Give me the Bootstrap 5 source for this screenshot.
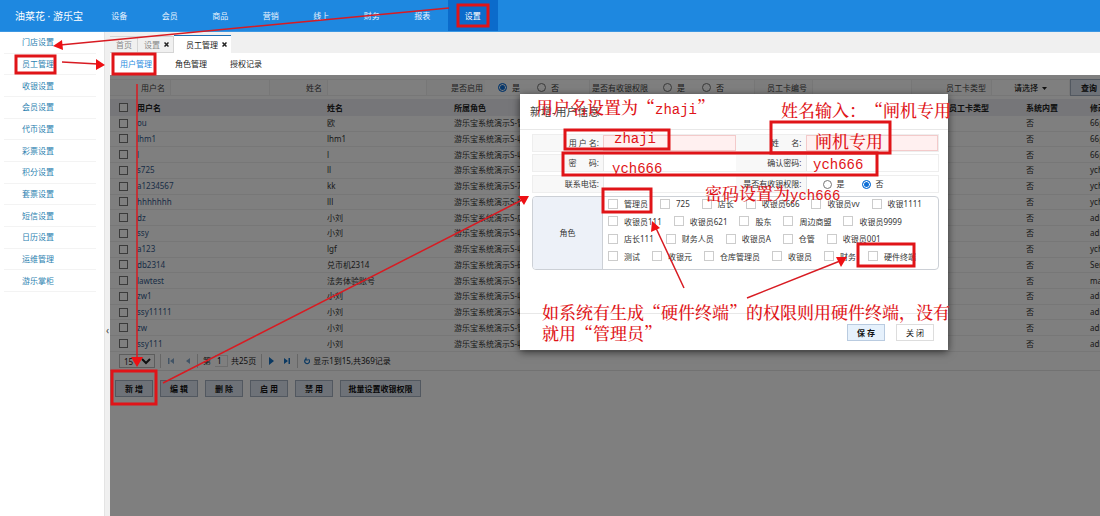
<!DOCTYPE html>
<html lang="zh-CN">
<head>
<meta charset="utf-8">
<meta name="viewport" content="width=device-width, initial-scale=1">
<title>员工管理</title>
<link href="https://cdn.jsdelivr.net/npm/bootstrap@5.3.0/dist/css/bootstrap.min.css" rel="stylesheet">
<style>
body{font:8px/12px "Noto Sans","Noto Sans CJK SC",sans-serif;color:#333;background:#fff;overflow:hidden;position:relative}
a{text-decoration:none}
.topbar{height:32px;background:#1e88e0;border-bottom:1px solid #3c97e2}
.brand{width:94px;padding-left:15px;font-size:10px;color:#fff;white-space:nowrap}
.mainnav{width:404px}
.mainnav a{color:#e8f3fd;flex:1 1 0;text-align:center;line-height:31px;height:31px}
.mainnav a.active{background:#0b6bcb;color:#fff}
.side{width:104px;flex:none}
.side nav{height:260px;padding:0 8px 0 4px}
.side a{flex:1 1 0;padding-left:18px;color:#2c7fb0;border-bottom:1px solid #f3f3f3;display:flex;align-items:center}
.splitter{width:6px;flex:none;background:#f0f0f0;border-left:1px solid #e4e4e4}
.splitter button{position:absolute;top:292px;left:0;width:5px;border:0;padding:0;background:none;color:#444;font-size:10px;line-height:12px}
.tabstrip{height:21px;background:#f0f0f0}
.tabstrip a{height:17px;border:1px solid #d5d5d5;border-left-width:0;color:#888;display:flex;align-items:center;gap:4px;white-space:nowrap}
.tabstrip a.home{padding:0 5px 0 6px}
.tabstrip a.other{padding:0 4px 0 6px}
.tabstrip a.active{height:18px;background:#fff;border:0;border-top:1px solid #1c6fb5;color:#222;padding:0 4px 0 12px}
.tabstrip svg{width:5px;height:5px}
.subtabs{height:22px;padding-left:10px}
.subtabs a{width:55px;color:#222}
.subtabs a.active{color:#2b8be0}
.work{padding:4px 0 0}
.shade{position:absolute;inset:0;background:rgba(0,0,0,.5)}
.filters{height:17px;width:1040px;margin-bottom:3px}
.filters>label,.filters>span.cap{background:#fafafa;border:1px solid #eee;border-width:1px 0;height:17px;line-height:15px;text-align:right;padding-right:5px;color:#444;flex:none;white-space:nowrap}
.filters>span.cap{padding-right:2px}
.filters .field{flex:none;height:17px;border:1px solid #eee;border-radius:0;background:#fff;padding:0 3px;font-size:8px}
.filters .choice{padding-left:13px}
.w38{width:38px}.w60{width:60px}.w57{width:57px}.w58{width:58px}.w100{width:100px}.w105{width:105px}.w79{width:79px}
.pick{appearance:none;flex:none;width:9px;height:9px;margin:0;border:1px solid #767676;background:#fff}
.pick[type=radio]{border-radius:50%}
.pick[type=radio]:checked{border:1px solid #0f6fd6;background:#0f6fd6;box-shadow:inset 0 0 0 1px #fff}
.rad{gap:5px;width:39px;display:flex;align-items:center}
.act{font:bold 8px/15px "Noto Sans","Noto Sans CJK SC",sans-serif;height:17px;border:1px solid #a5b0c0;background:#dde4f0;color:#111;padding:0;flex:none;border-radius:0}
.grid{table-layout:fixed;width:1090px;height:253px;border-collapse:collapse}
.grid thead tr{height:17px}
.grid th{background:#ecedf2;color:#222;font-weight:bold;padding:0;white-space:nowrap}
.grid td{padding:0;border-bottom:1px solid #eee;white-space:nowrap;line-height:12px}
.grid td a{color:#345a8c}
.grid .pick{display:block;margin-left:9px}
.pager{height:19px;padding-left:9px;color:#222;border-bottom:1px solid #e5e5e5;white-space:nowrap}
.pager select{width:36px;height:14px;border:1px solid #bbb;font-size:8px;line-height:12px;padding:0;background:#fff;color:#222}
.pager input{width:13px;height:12px;border:1px solid #ddd;border-left:0;font-size:8px;padding:0 0 0 2px;text-align:left}
.pager button{border:0;background:none;padding:0;width:6px;height:8px;display:flex}
.pager svg{width:6px;height:8px}
.pager .rule{width:1px;height:14px;background:#ccc}
.tools{gap:7px;padding:9px 0 0 5px}
.tools .act{width:38px}.tools .act.wide{width:81px}
.dlg{position:absolute;left:520px;top:94px;width:428px;height:256px;background:#fff;box-shadow:0 2px 8px rgba(0,0,0,.6)}
.dlg h1{font-size:11px;line-height:35px;height:36px;margin:0;padding-left:10px;border-bottom:1px solid #e8e8e8;font-weight:400;color:#444}
.dlg .frm{padding:4px 9px 0 12px}
.dlg .line{height:18px;margin-bottom:3px;border:1px solid #eee;background:#fff}
.dlg .line:first-child{margin-bottom:2px}
.dlg .lab{width:70px;flex:none;background:#f8f8f8;text-align:right;padding-right:4px;line-height:16px;white-space:pre}
.dlg .line input.txt{flex:1 1 0;min-width:0;border:0;border-left:1px solid #e5e5e5;font-size:8px;padding:0 3px;border-radius:0}
.dlg .line input.need{background:#fff0f0;border:1px solid #f3caca}
.dlg .half{flex:1 1 0;min-width:0}
.roles{height:74px;border:1px solid #ccd0d6;border-radius:4px;overflow:hidden}
.roles .ttl{width:70px;background:#edf1f8;border-right:1px solid #ccd0d6}
.roles .opts{padding:0 0 6px 5px}
.roles label{display:flex;align-items:center;gap:6px;margin-right:12px;line-height:13px;white-space:nowrap}
.roles .pick{border-color:#ccc;width:10px;height:10px}
.dlg footer{position:absolute;left:0;right:0;bottom:0;height:37px;border-top:1px solid #e8e8e8;padding:10px 14px 0;gap:11px}
.dlg footer .act{width:38px}
.dlg footer .act.save{background:#e6f1fc;border-color:#b9cbe0}
.dlg footer .act.plain{background:#fff;border-color:#ddd;font-weight:400}
.notes{position:absolute;left:0;top:0;width:1100px;height:516px;pointer-events:none;overflow:visible}
.notes text{font:500 17px "Noto Serif CJK SC","Noto Sans CJK SC",serif;fill:#e01418;font-kerning:none;text-spacing-trim:space-all;font-feature-settings:"chws" 0}
.notes .la{font:14px "Liberation Mono",monospace}
</style>
</head>
<body class="vh-100 d-flex flex-column">
<header class="topbar d-flex align-items-center flex-shrink-0">
  <div class="brand">油菜花 · 游乐宝</div>
  <nav class="mainnav d-flex"><a href="#">设备</a><a href="#">会员</a><a href="#">商品</a><a href="#">营销</a><a href="#">线上</a><a href="#">财务</a><a href="#">报表</a><a href="#" class="active">设置</a></nav>
</header>
<div class="d-flex flex-grow-1">
  <aside class="side"><nav class="d-flex flex-column"><a href="#">门店设置</a><a href="#">员工管理</a><a href="#">收银设置</a><a href="#">会员设置</a><a href="#">代币设置</a><a href="#">彩票设置</a><a href="#">积分设置</a><a href="#">套票设置</a><a href="#">短信设置</a><a href="#">日历设置</a><a href="#">运维管理</a><a href="#">游乐掌柜</a></nav></aside>
  <div class="splitter position-relative"><button type="button" aria-label="收起">‹</button></div>
  <div class="flex-grow-1 d-flex flex-column" style="min-width:0">
    <div class="tabstrip d-flex align-items-end flex-shrink-0">
      <a href="#" class="home">首页</a>
      <a href="#" class="other">设置<svg viewBox="0 0 5 5"><path d="M.5.5l4 4M4.500.5l-4 4" stroke="#222" stroke-width="1.500"/></svg></a>
      <a href="#" class="active">员工管理<svg viewBox="0 0 5 5"><path d="M.5.5l4 4M4.500.5l-4 4" stroke="#222" stroke-width="1.500"/></svg></a>
    </div>
    <nav class="subtabs d-flex align-items-center flex-shrink-0"><a href="#" class="active">用户管理</a><a href="#">角色管理</a><a href="#">授权记录</a></nav>
    <main class="work flex-grow-1 position-relative overflow-hidden">
      <form class="filters d-flex align-items-center">
        <label class="w60" for="fu">用户名</label><input id="fu" class="field w100">
        <label class="w57" for="fn">姓名</label><input id="fn" class="field w100">
        <span class="cap w58">是否启用</span>
        <div class="field choice border-start-0 w105 d-flex align-items-center"><label class="rad"><input class="pick" type="radio" name="on" checked>是</label><label class="rad"><input class="pick" type="radio" name="on">否</label></div>
        <span class="cap w60">是否有收银权限</span>
        <div class="field choice border-start-0 w105 d-flex align-items-center"><label class="rad"><input class="pick" type="radio" name="cash">是</label><label class="rad"><input class="pick" type="radio" name="cash">否</label></div>
        <label class="w57" for="fc">员工卡编号</label><input id="fc" class="field w100">
        <label class="w79" for="ft">员工卡类型</label>
        <button type="button" id="ft" class="field w79 text-center">请选择&nbsp; <svg width="5" height="3" viewBox="0 0 5 3"><path d="M0 0h5L2.500 3z" fill="#222"/></svg></button>
        <button type="button" class="act w38">查询</button>
      </form>
      <table class="grid"><colgroup><col style="width:27px"><col style="width:190px"><col style="width:127px"><col style="width:495px"><col style="width:77px"><col style="width:64px"><col></colgroup>
        <thead><tr><th><input class="pick" type="checkbox" aria-label="全选"></th><th>用户名</th><th>姓名</th><th>所属角色</th><th>员工卡类型</th><th>系统内置</th><th>修改人</th></tr></thead>
        <tbody id="rows"></tbody></table>
      <div class="pager d-flex align-items-center">
        <select aria-label="每页条数"><option>15</option></select>
        <span class="rule" style="margin:0 7px 0 5px"></span>
        <button type="button" aria-label="首页"><svg viewBox="0 0 6 8"><path d="M0 1h1.500v6H0zM6 1v6L2 4z" fill="#85a9cc"/></svg></button>
        <button type="button" aria-label="上一页" style="margin-left:11px"><svg viewBox="0 0 6 8"><path d="M5 1v6L1 4z" fill="#85a9cc"/></svg></button>
        <span class="rule" style="margin:0 5px 0 6px"></span>
        <label for="pg">第</label><input id="pg" value="1" class="ms-1">
        <span style="margin:0 5px 0 3px">共25页</span><span class="rule"></span>
        <button type="button" aria-label="下一页" style="margin-left:6px"><svg viewBox="0 0 6 8"><path d="M1 0v8L6 4z" fill="#1672c4"/></svg></button>
        <button type="button" aria-label="末页" style="margin-left:10px"><svg viewBox="0 0 6 8"><path d="M4.500 1H6v6H4.500zM0 1v6L4 4z" fill="#1672c4"/></svg></button>
        <span class="rule" style="margin:0 6px 0 7px"></span>
        <button type="button" aria-label="刷新"><svg viewBox="0 0 6 8"><path d="M2 2a2.400 2.400 0 1 0 2.500.2M2 .5v2.500h2" fill="none" stroke="#1672c4" stroke-width="1.200"/></svg></button>
        <span style="margin-left:3px">显示1到15,共369记录</span>
      </div>
      <div class="tools d-flex"><button class="act">新 增</button><button class="act">编 辑</button><button class="act">删 除</button><button class="act">启 用</button><button class="act">禁 用</button><button class="act wide">批量设置收银权限</button></div>
      <div class="shade"></div>
    </main>
  </div>
</div>

<section class="dlg" role="dialog" aria-label="新增-用户信息">
  <h1>新增-用户信息</h1>
  <form class="frm">
    <div class="line d-flex"><div class="half d-flex"><label class="lab" for="u1">用 户 名:</label><input id="u1" class="txt need"></div><div class="half d-flex"><label class="lab" for="u2">姓      名:</label><input id="u2" class="txt need"></div></div>
    <div class="line d-flex"><div class="half d-flex"><label class="lab" for="u3">密      码:</label><input id="u3" class="txt" type="password"></div><div class="half d-flex"><label class="lab" for="u4">确认密码:</label><input id="u4" class="txt" type="password"></div></div>
    <div class="line d-flex"><div class="half d-flex"><label class="lab" for="u5">联系电话:</label><input id="u5" class="txt"></div><div class="half d-flex"><span class="lab">是否有收银权限:</span><div class="d-flex align-items-center border-start ps-3"><label class="rad"><input class="pick" type="radio" name="c2">是</label><label class="rad"><input class="pick" type="radio" name="c2" checked>否</label></div></div></div>
    <div class="roles d-flex"><div class="ttl d-flex align-items-center justify-content-center flex-shrink-0">角色</div><div class="opts flex-grow-1 d-flex flex-column justify-content-between" id="opts"></div></div>
  </form>
  <footer class="d-flex justify-content-end"><button class="act save">保 存</button><button class="act plain">关 闭</button></footer>
</section>

<svg class="notes" viewBox="0 0 1100 516">
  <g fill="none" stroke="#e01418" stroke-width="3">
    <rect x="458" y="5" width="30" height="21"/><rect x="16" y="56" width="39" height="17"/><rect x="113" y="54" width="42" height="20"/><rect x="112" y="371" width="44" height="33"/>
    <rect x="565" y="130" width="104" height="19"/><rect x="771" y="122" width="119" height="31"/><rect x="563" y="153" width="314" height="22"/><rect x="603" y="189" width="48" height="23"/><rect x="858" y="244" width="56" height="22"/>
  </g>
  <path fill="none" stroke="#d81b22" stroke-width="1.500" d="M449 8L60 45M62 62L98 64M137 84V360M163 383L522 200M684 288L655 226M747 298L840 261"/>
  <path fill="#ee1014" d="M53 46L62 40L63 50zM105 65L96 59L96 70zM137 367L131 357H143zM529 196L518 196L524 205zM652 221L651 232L660 228zM847 257L836 257L841 267z"/>
  <text x="536" y="114">用户名设置为“<tspan class="la">zhaji</tspan>”</text>
  <text x="781" y="117">姓名输入：“闸机专用</text>
  <text class="la" x="614" y="143"><tspan class="la">zhaji</tspan></text>
  <text x="815" y="148">闸机专用</text>
  <text x="612" y="173"><tspan class="la">ych666</tspan></text>
  <text x="813" y="169"><tspan class="la">ych666</tspan></text>
  <text x="705" y="200">密码设置为<tspan class="la">ych666</tspan></text>
  <text x="542" y="319">如系统有生成“硬件终端”的权限则用硬件终端，没有</text>
  <text x="542" y="340">就用“管理员”</text>
</svg>
<script>
const data=[["ou","欧","管理员","66p"],["lhm1","lhm1","收银员","66p"],["l","l","收银员","66p"],["s725","ll","725","ych"],["a1234567","kk","725","ych"],["hhhhhhh","lll","店长","ych"],["dz","小刘","店长","adm"],["ssy","小刘","收银员","adm"],["a123","lgf","收银员","ych"],["db2314","兑币机2314","硬件终端","Ser"],["lawtest","法务体验账号","管理员","ma"],["zw1","小刘","收银员","adm"],["ssy11111","小刘","收银员","adm"],["zw","小刘","管理员","adm"],["ssy111","小刘","收银员","adm"]];
document.getElementById('rows').innerHTML=data.map(r=>`<tr><td><input class="pick" type="checkbox" aria-label="${r[0]}"></td><td><a href="#">${r[0]}</a></td><td>${r[1]}</td><td>游乐宝系统演示S-${r[2]}</td><td></td><td>否</td><td>${r[3]}</td></tr>`).join('');
const roles=["管理员,725,店长,收银员666,收银员vv,收银1111","收银员111,收银员621,股东,周边商盟,收银员9999","店长111,财务人员,收银员A,仓管,收银员001","测试,收银元,仓库管理员,收银员,财务,硬件终端"];
document.getElementById('opts').innerHTML=roles.map(l=>'<div class="d-flex">'+l.split(',').map(t=>`<label><input class="pick" type="checkbox">${t}</label>`).join('')+'</div>').join('');
</script>
<script src="https://cdn.jsdelivr.net/npm/bootstrap@5.3.0/dist/js/bootstrap.bundle.min.js"></script>
</body>
</html>
